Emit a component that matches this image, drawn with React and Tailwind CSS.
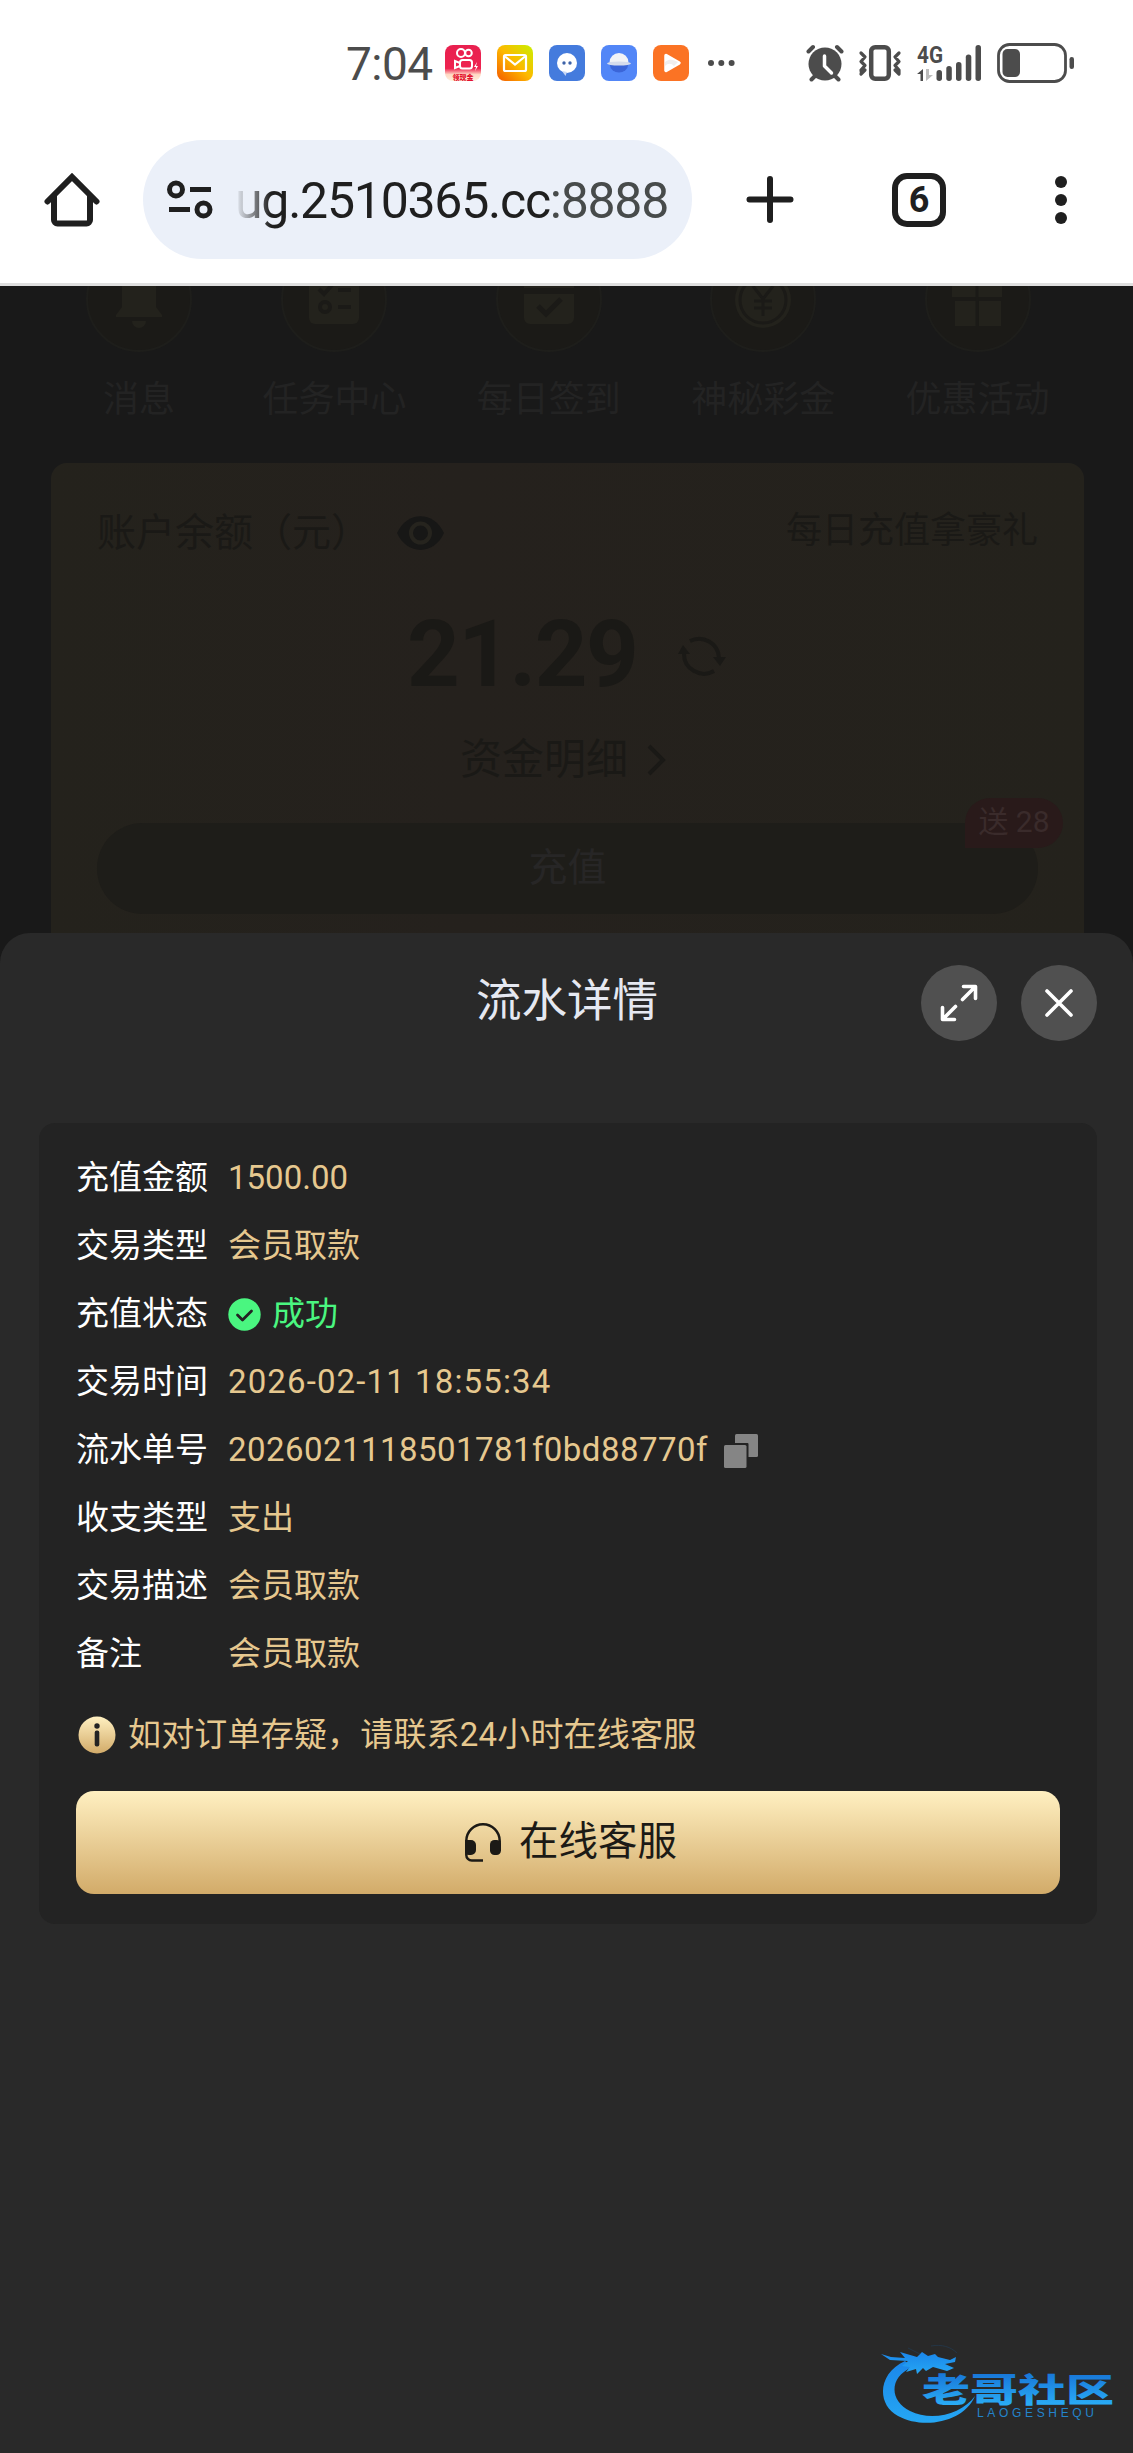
import React from "react";

const AppTile = ({ children }) => (
  <svg width="36" height="36" viewBox="0 0 36 36" className="block shrink-0">{children}</svg>
);

function StatusBar() {
  return (
    <div className="flex h-[126px] items-center pl-[346px] text-[#4c4c4c]">
      <div className="mt-[2px] w-[99px] text-[46px] leading-none tracking-[-0.5px] whitespace-nowrap">7:04</div>
      <div className="flex gap-4">
        <AppTile>
          <defs>
            <linearGradient id="ks" x1="0" y1="0" x2="0" y2="1">
              <stop offset="0" stopColor="#e8204f" /><stop offset="0.65" stopColor="#ee2350" /><stop offset="0.82" stopColor="#ffd9c4" /><stop offset="1" stopColor="#fff0dc" />
            </linearGradient>
          </defs>
          <rect width="36" height="36" rx="8" fill="url(#ks)" />
          <g fill="none" stroke="#fff" strokeWidth="2">
            <circle cx="16" cy="8" r="4" /><circle cx="23.500" cy="8" r="3.300" />
            <rect x="15" y="15" width="12" height="8.500" rx="2.500" />
            <path d="M15 18l-5-2v7l5-2" />
          </g>
          <path d="M32 17l-3 5h2l-1 4 3-5h-2z" fill="#fff" />
          <text x="18" y="34.500" fontSize="7" fontWeight="900" textAnchor="middle" fill="#e3122f" className="font-['Noto_Sans_CJK_SC']">领现金</text>
        </AppTile>
        <AppTile>
          <defs>
            <linearGradient id="ml" x1="1" y1="0" x2="0" y2="1">
              <stop offset="0" stopColor="#c9f000" /><stop offset="0.5" stopColor="#fdb900" /><stop offset="1" stopColor="#f45a00" />
            </linearGradient>
          </defs>
          <rect width="36" height="36" rx="8" fill="url(#ml)" />
          <rect x="7" y="10" width="22" height="16" rx="1.500" fill="none" stroke="#fff" strokeWidth="2.200" />
          <path d="M8 11.500l10 8 10-8" fill="none" stroke="#fff" strokeWidth="2.200" />
        </AppTile>
        <AppTile>
          <rect width="36" height="36" rx="8" fill="#447bdd" />
          <circle cx="18" cy="18" r="10" fill="#fff" />
          <path d="M13 26l3.500 5 1.500-4z" fill="#c8d8f6" />
          <circle cx="15" cy="18" r="1.700" fill="#3d62a8" /><circle cx="21" cy="18" r="1.700" fill="#3d62a8" />
        </AppTile>
        <AppTile>
          <rect width="36" height="36" rx="8" fill="#5286f7" />
          <path d="M9 20a9 7.500 0 0 0 18 0z" fill="#3b65d8" />
          <path d="M8.500 17.500a9.500 9.500 0 0 1 19 0z" fill="#f2f3f6" />
          <ellipse cx="18" cy="18.500" rx="12" ry="2" fill="#d6dcec" />
        </AppTile>
        <AppTile>
          <rect width="36" height="36" rx="8" fill="#fb7324" />
          <path d="M13 10.500l13 7.500-13 7.500z" fill="#fff" stroke="#fff" strokeWidth="3.500" strokeLinejoin="round" />
          <path d="M12 17c5-4 9-2 13 0l-4 4c-3-3-6-3-9 0z" fill="#f0eeee" />
        </AppTile>
      </div>
      <svg width="27" height="6" viewBox="0 0 27 6" className="ml-[19px] block" fill="currentColor">
        <circle cx="3" cy="3" r="3" /><circle cx="13.300" cy="3" r="3" /><circle cx="23.600" cy="3" r="3" />
      </svg>
      <svg width="38" height="38" viewBox="0 0 38 38" className="ml-[71px] block">
        <g stroke="currentColor" strokeWidth="4" strokeLinecap="round"><path d="M2.500 7.500l4.500-4.500M31 3l4.500 4.500M9 32l-3.500 3.500M29 32l3.500 3.500" /></g>
        <circle cx="19" cy="20" r="16.500" fill="currentColor" />
        <path d="M18.500 12v10l7 7" fill="none" stroke="#fff" strokeWidth="3.500" strokeLinecap="round" strokeLinejoin="round" />
      </svg>
      <svg width="44" height="38" viewBox="0 0 44 38" className="ml-[14px] block" fill="none" stroke="currentColor" strokeLinecap="round" strokeLinejoin="round">
        <rect x="13.200" y="3.200" width="17.600" height="31.600" rx="4" strokeWidth="4.500" />
        <path d="M3 9l4 4-4 4.500 4 4-4 4.500 0.500 3.500M7 26l-4 4M41 9l-4 4 4 4.500-4 4 4 4.500 0 3.500M37 26l4 4" strokeWidth="3.200" />
      </svg>
      <svg width="66" height="40" viewBox="0 0 66 40" className="ml-[15px] block" fill="currentColor">
        <text x="0" y="20" fontSize="24" fontWeight="700" textLength="26" lengthAdjust="spacingAndGlyphs" className="font-['Roboto']">4G</text>
        <path d="M6 26v12H3.500V31H0z" /><path d="M9 26v12l7-6h-4v-6z" fill="#bdbdbd" />
        <rect x="19.500" y="27" width="5.500" height="11" rx="2.700" /><rect x="29.300" y="23" width="5.500" height="15" rx="2.700" />
        <rect x="39" y="19" width="5.500" height="19" rx="2.700" /><rect x="48.800" y="11.500" width="5.500" height="26.500" rx="2.700" /><rect x="58.500" y="2" width="5.500" height="36" rx="2.700" />
      </svg>
      <svg width="78" height="40" viewBox="0 0 78 40" className="ml-[14px] block">
        <rect x="1.500" y="1.500" width="67" height="37" rx="11" fill="none" stroke="currentColor" strokeWidth="2.800" />
        <rect x="5.500" y="6" width="17.500" height="28" rx="5" fill="currentColor" /><rect x="72.500" y="14" width="4.500" height="12" rx="2.200" fill="currentColor" />
      </svg>
    </div>
  );
}

function BrowserBar() {
  return (
    <div className="flex h-[157px] items-start pt-[14px] pl-[44px] text-[#1f1f1f]">
      <svg width="56" height="56" viewBox="0 0 56 56" className="mt-[32px] block" fill="none" stroke="currentColor" strokeWidth="6">
        <path d="M3.500 29.500L28 5l24.500 24.500" strokeLinecap="round" />
        <path d="M10 24v24a3.500 3.500 0 0 0 3.500 3.500h29A3.500 3.500 0 0 0 46 48V24" />
      </svg>
      <div className="ml-[43px] flex h-[119px] w-[549px] items-center rounded-full bg-[#ebf0f9] pl-[24px]">
        <svg width="46" height="40" viewBox="0 0 46 40" className="block" fill="none" stroke="currentColor" strokeWidth="5">
          <circle cx="9" cy="9.500" r="6.500" /><circle cx="36.500" cy="29.500" r="6.500" />
          <path d="M23 9.500h21M2 29.500h21" />
        </svg>
        <div className="relative mt-[2px] ml-[22px] w-[435px] text-[50px] leading-[70px] tracking-[-1.25px] whitespace-nowrap">
          ug.2510365.cc<span className="text-[#474b4b]">:8888</span>
          <div className="absolute top-0 left-0 h-full w-[36px] bg-gradient-to-r from-[#ebf0f9] to-[#ebf0f9]/0" />
        </div>
      </div>
      <svg width="48" height="48" viewBox="0 0 48 48" className="mt-[36px] ml-[54px] block" stroke="currentColor" strokeWidth="6" strokeLinecap="round">
        <path d="M24 3v41M3.500 23.500h41" />
      </svg>
      <div className="mt-[33px] ml-[98px] flex h-[54px] w-[54px] items-center justify-center rounded-[15px] border-[6px] border-[#1f1f1f] text-[36px] leading-none font-bold">6</div>
      <div className="mt-[36px] ml-[109px] flex flex-col gap-[6px]">
        <div className="h-3 w-3 rounded-full bg-[#1f1f1f]" /><div className="h-3 w-3 rounded-full bg-[#1f1f1f]" /><div className="h-3 w-3 rounded-full bg-[#1f1f1f]" />
      </div>
    </div>
  );
}

const shortcuts = [
  ["消息", <g key="a"><path d="M36 44v-8a17 17 0 0 1 34 0v25l6 8v2H30v-2l6-8z" /><path d="M46 75h14a7 7 0 0 1-14 0z" /></g>],
  ["任务中心", <g key="b"><rect x="28" y="28" width="50" height="50" rx="6" /><g fill="none" stroke="#1b1a17" strokeWidth="4"><path d="M38 43l5 5 8-9M57 44h13M57 61h13" /><circle cx="44" cy="61" r="5" /></g></g>],
  ["每日签到", <g key="c"><path d="M28 30h50v12H28zM28 48h50v24a6 6 0 0 1-6 6H34a6 6 0 0 1-6-6z" /><path d="M42 60l8 8 15-15" fill="none" stroke="#1b1a17" strokeWidth="5" /></g>],
  ["神秘彩金", <g key="d"><circle cx="53" cy="54" r="28" /><circle cx="53" cy="54" r="23" fill="none" stroke="#1b1a17" strokeWidth="3" /><path d="M43 40l10 13 10-13M53 53v17M44 55h18M44 62h18" fill="none" stroke="#1b1a17" strokeWidth="3" /></g>],
  ["优惠活动", <g key="e"><path d="M27 36h50v15H27zM30 55h21v25H30zM54 55h22v25H54z" /><path d="M52 30v50" stroke="#1b1a17" strokeWidth="3" /></g>],
];

function Backdrop() {
  return (
    <div className="h-[677px] overflow-hidden bg-[#191919]">
      <div className="-mt-[40px] flex gap-[70.400px] pl-[86px]">
        {shortcuts.map(([label, icon]) => (
          <div key={label} className="flex flex-col items-center text-[36px] leading-[46px] text-[#232323]">
            <svg width="106" height="106" viewBox="0 0 106 106" className="mb-[25px] block" fill="#23221c">
              <circle cx="53" cy="53" r="52" fill="#1b1a17" stroke="#1e1e1b" strokeWidth="2" />
              {icon}
            </svg>
            <span className="whitespace-nowrap">{label}</span>
          </div>
        ))}
      </div>
      <div className="mt-[40px] mr-[49px] ml-[51px] h-[520px] rounded-[16px] bg-gradient-to-r from-[#24221c] via-[#25211d] via-40% to-[#24221c] px-[46px] text-[#1a1916]">
        <div className="flex items-center pt-[42px]">
          <span className="text-[39px] leading-[56px]">账户余额（元）</span>
          <svg width="47" height="34" viewBox="0 0 47 34" className="ml-[27px] block">
            <path d="M0 17C10-5.500 37-5.500 47 17C37 39.500 10 39.500 0 17z" fill="#171716" />
            <circle cx="23.500" cy="17" r="9.500" fill="none" stroke="#26241e" strokeWidth="4" />
          </svg>
          <span className="mb-[5px] ml-auto text-[36px] leading-[50px]">每日充值拿豪礼</span>
        </div>
        <div className="mt-[39px] flex items-center pl-[310px]">
          <span className="w-[271px] text-[92px] leading-[110px] font-bold tracking-[-1.500px]">21.29</span>
          <svg width="48" height="44" viewBox="0 0 48 44" className="mt-[2px] block" fill="none" stroke="#1a1916" strokeWidth="4">
            <path d="M12 7A20 20 0 0 1 41 24M36 37A20 20 0 0 1 6 19" />
            <path d="M35 23h13l-6 9zM0 20h12L5 11z" fill="#1a1916" stroke="none" />
          </svg>
        </div>
        <div className="mt-[20px] flex items-center pl-[363px] text-[42px] leading-[60px]">
          资金明细
          <svg width="20" height="32" viewBox="0 0 20 32" className="ml-[19px] block" fill="none" stroke="currentColor" strokeWidth="4"><path d="M2 2l14 14L2 30" /></svg>
        </div>
        <div className="relative mt-[33px] flex h-[91px] items-center justify-center rounded-full bg-[#1e1d19] text-[39px] text-[#272626]">
          充值
          <div className="absolute -top-[25px] -right-[25px] flex h-[50px] w-[98px] items-center justify-center rounded-full rounded-bl-[20px] bg-[#291a1a] pb-[3px] text-[30px] text-[#3a2b2b]">送 28</div>
        </div>
      </div>
    </div>
  );
}

function CheckBadge() {
  return (
    <svg width="33" height="33" viewBox="0 0 33 33" className="mr-[11px] block">
      <circle cx="16.500" cy="16.500" r="16.200" fill="#4af680" />
      <path d="M9.500 17l5 5 9-9" fill="none" stroke="#232323" strokeWidth="2.800" strokeLinecap="round" strokeLinejoin="round" />
    </svg>
  );
}

function CopyIcon() {
  return (
    <svg width="34" height="34" viewBox="0 0 34 34" className="mt-[2px] ml-[16px] block">
      <rect x="11" width="23" height="23" rx="1.500" fill="#858585" />
      <rect x="0" y="9" width="24.500" height="25" rx="1" fill="#232323" />
      <rect x="0" y="11" width="22.500" height="23" rx="1.500" fill="#858585" />
    </svg>
  );
}

const rows = [
  ["充值金额", "1500.00"],
  ["交易类型", "会员取款"],
  ["充值状态", "成功"],
  ["交易时间", "2026-02-11 18:55:34"],
  ["流水单号", "2026021118501781f0bd88770f"],
  ["收支类型", "支出"],
  ["交易描述", "会员取款"],
  ["备注", "会员取款"],
];

const tracking = { 交易时间: "tracking-[1.12px]", 流水单号: "tracking-[0.45px]" };

function DetailSheet() {
  return (
    <div className="relative -mt-[30px] h-[1520px] rounded-t-[30px] bg-[#292929] pt-[190px]">
      <div className="absolute top-0 right-0 left-0 flex h-[142px] items-center justify-center text-[45.500px] text-[#e5e8f1]">
        <span className="-mt-[4px] pl-[1px]">流水详情</span>
        <div className="absolute top-[32px] right-[36px] flex gap-6">
          <div className="flex h-[76px] w-[76px] items-center justify-center rounded-full bg-[#505050]">
            <svg width="38" height="38" viewBox="0 0 38 38" fill="none" stroke="#fff" strokeWidth="3.600" strokeLinecap="round" strokeLinejoin="round">
              <path d="M22.500 15.500L35 3M23.500 2.500H35.500V14.500M15.500 22.500L3 35M2.500 23.500V35.500H14.500" />
            </svg>
          </div>
          <div className="flex h-[76px] w-[76px] items-center justify-center rounded-full bg-[#505050]">
            <svg width="28" height="28" viewBox="0 0 28 28" stroke="#fff" strokeWidth="3.600" strokeLinecap="round"><path d="M2 2l24 24M26 2L2 26" /></svg>
          </div>
        </div>
      </div>
      <div className="mr-[36px] ml-[39px] h-[801px] rounded-[16px] bg-[#232323] px-[37px] pt-[21px] text-[33px]">
        {rows.map(([label, value]) => (
          <div key={label} className="flex h-[68px] items-center whitespace-nowrap">
            <span className="w-[152px] text-white">{label}</span>
            {value === "成功" && <CheckBadge />}
            <span className={`${tracking[label] || ""} ${value === "成功" ? "text-[#4af680]" : "text-[#e6c88f]"}`}>{value}</span>
            {label === "流水单号" && <CopyIcon />}
          </div>
        ))}
        <div className="mt-[23px] flex h-[48px] items-center tracking-[0.18px] text-[#e6c88f]">
          <svg width="38" height="38" viewBox="0 0 38 38" className="mr-[12px] ml-[2px] block">
            <defs><linearGradient id="info" x1="0" y1="0" x2="0" y2="1"><stop offset="0" stopColor="#fff0c1" /><stop offset="1" stopColor="#d2ab69" /></linearGradient></defs>
            <circle cx="19" cy="19" r="18.500" fill="url(#info)" />
            <circle cx="19" cy="10" r="2.700" fill="#232323" /><rect x="16.700" y="14.500" width="4.600" height="16" rx="2" fill="#232323" />
          </svg>
          如对订单存疑，请联系24小时在线客服
        </div>
        <div className="mt-[32px] flex h-[103px] items-center rounded-[18px] bg-gradient-to-b from-[#fff0c1] to-[#d2ab69] pl-[389px] text-[39.500px] text-[#1c1a16]">
          <svg width="36" height="40" viewBox="0 0 36 40" className="block" fill="none" stroke="currentColor" strokeWidth="2.500">
            <path d="M1.300 20v-2a16.700 16.700 0 0 1 33.400 0v6" /><path d="M1.300 20v12a5.500 5.500 0 0 0 5.500 5.500H18" />
            <path d="M0 17h6a5 5 0 0 1 5 5v5a5 5 0 0 1-5 5H4a4 4 0 0 1-4-4z" fill="currentColor" stroke="none" />
            <rect x="25" y="17" width="11" height="15" rx="4.500" fill="currentColor" stroke="none" />
          </svg>
          <span className="mb-[1px] ml-[18px]">在线客服</span>
        </div>
      </div>
      <Watermark />
    </div>
  );
}

function Watermark() {
  return (
    <svg width="240" height="90" viewBox="0 0 240 90" className="absolute right-[15px] bottom-[23px]">
      <defs>
        <linearGradient id="wm" x1="0" y1="0" x2="0" y2="1"><stop offset="0" stopColor="#1b86ea" /><stop offset="1" stopColor="#25a7f4" /></linearGradient>
        <linearGradient id="wt" x1="0" y1="0" x2="0" y2="1"><stop offset="0.200" stopColor="#1877d8" /><stop offset="0.900" stopColor="#2bb0f8" /></linearGradient>
      </defs>
      <g fill="url(#wm)">
        <path d="M27 21C0 33-2 64 20 76C46 90 86 82 97 56C84 74 54 82 32 71C12 61 10 38 34 27Z" />
        <path d="M3 14L13 17L27 18L22 12L39 17L44 12L50 16L57 14L60 17L72 20L78 17L77 22L67 24L76 28L69 31L55 27L48 31L45 28L39 34L38 29L28 32L32 27L24 26L30 21L12 20Z" />
        <path d="M30 8l12 6M53 6c11-2 20 1 26 7" fill="none" stroke="#23394d" strokeWidth="0.800" />
      </g>
      <text x="44" y="62" fontSize="33" fontWeight="900" textLength="192" lengthAdjust="spacingAndGlyphs" fill="url(#wt)" className="font-['Noto_Sans_CJK_SC']">老哥社区</text>
      <text x="99" y="77" fontSize="12" textLength="117" fill="#2384cb" className="font-['Liberation_Sans']">LAOGESHEQU</text>
    </svg>
  );
}

export default function App() {
  return (
    <div className="h-[2453px] w-[1133px] overflow-hidden bg-white font-['Roboto','Noto_Sans_CJK_SC',sans-serif]">
      <StatusBar />
      <BrowserBar />
      <div className="h-[3px] bg-[#dfdfdf]" />
      <Backdrop />
      <DetailSheet />
    </div>
  );
}
